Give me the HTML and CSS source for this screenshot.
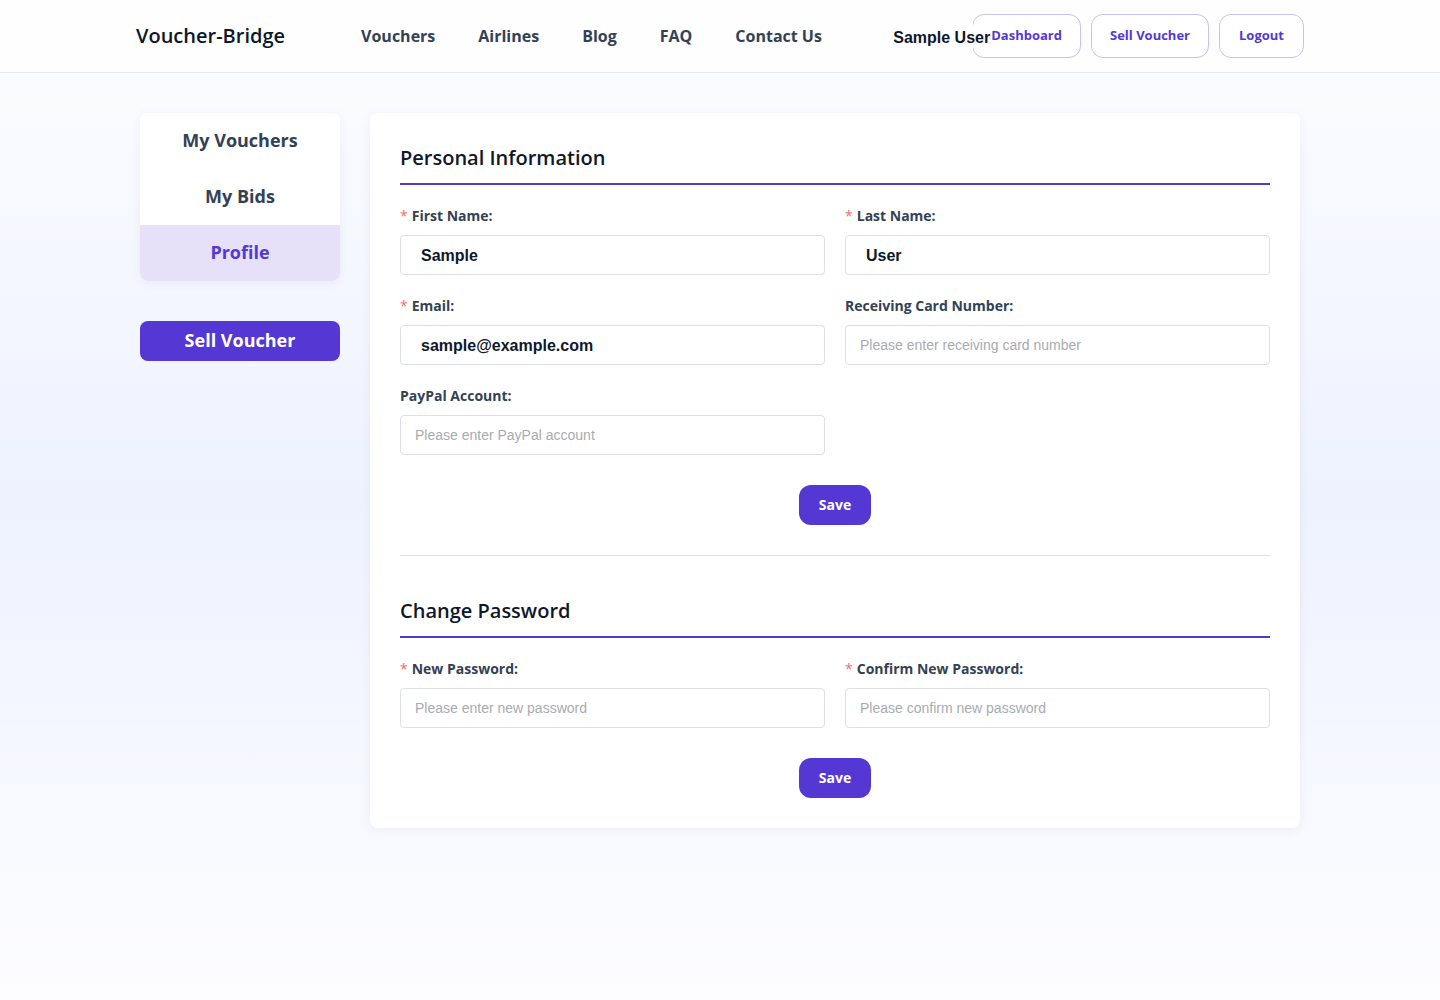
FILE: index.html
```
<!DOCTYPE html>
<html lang="en">
<head>
    <meta charset="UTF-8">
    <meta name="viewport" content="width=device-width, initial-scale=1.0">
    <title>Profile - Voucher-Bridge</title>
    <link rel="stylesheet" href="styles.css">
</head>
<body>
    <header class="header">
        <div class="header-inner">
            <a class="logo" href="#">Voucher-Bridge</a>
            <nav class="nav">
                <a href="#">Vouchers</a>
                <a href="#">Airlines</a>
                <a href="#">Blog</a>
                <a href="#">FAQ</a>
                <a href="#">Contact Us</a>
            </nav>
            <div class="actions">
                <span class="user-name">Sample User</span>
                <button type="button" class="btn-outline">Dashboard</button>
                <button type="button" class="btn-outline">Sell Voucher</button>
                <button type="button" class="btn-outline">Logout</button>
            </div>
        </div>
    </header>

    <div class="container">
        <aside class="sidebar">
            <nav class="menu">
                <a href="#">My Vouchers</a>
                <a href="#">My Bids</a>
                <a href="#" class="active">Profile</a>
            </nav>
            <button type="button" class="btn-sell">Sell Voucher</button>
        </aside>

        <main class="content">
            <form class="section">
                <h2>Personal Information</h2>
                <div class="form-grid">
                    <div class="form-item required">
                        <label for="firstName">First Name:</label>
                        <input type="text" id="firstName" class="filled" value="Sample">
                    </div>
                    <div class="form-item required">
                        <label for="lastName">Last Name:</label>
                        <input type="text" id="lastName" class="filled" value="User">
                    </div>
                    <div class="form-item required">
                        <label for="email">Email:</label>
                        <input type="email" id="email" class="filled" value="sample@example.com">
                    </div>
                    <div class="form-item">
                        <label for="card">Receiving Card Number:</label>
                        <input type="text" id="card" placeholder="Please enter receiving card number">
                    </div>
                    <div class="form-item">
                        <label for="paypal">PayPal Account:</label>
                        <input type="text" id="paypal" placeholder="Please enter PayPal account">
                    </div>
                </div>
                <button type="button" class="btn-save">Save</button>
            </form>

            <form class="section">
                <h2>Change Password</h2>
                <div class="form-grid">
                    <div class="form-item required">
                        <label for="newPassword">New Password:</label>
                        <input type="password" id="newPassword" placeholder="Please enter new password">
                    </div>
                    <div class="form-item required">
                        <label for="confirmPassword">Confirm New Password:</label>
                        <input type="password" id="confirmPassword" placeholder="Please confirm new password">
                    </div>
                </div>
                <button type="button" class="btn-save">Save</button>
            </form>
        </main>
    </div>
</body>
</html>
```
FILE: styles.css
```
* {
    box-sizing: border-box;
}
body {
    margin: 0;
    min-height: 100vh;
    font-family: "Open Sans", "Noto Sans", sans-serif;
    color: #334155;
    background: linear-gradient(180deg, #fdfdff 0%, #eef2ff 50%, #fdfdff 100%);
}
a {
    color: inherit;
    text-decoration: none;
}
button {
    padding: 0 0 2px;
    font-family: inherit;
    cursor: pointer;
}

/* header */
.header {
    background: #fefefe;
    border-bottom: 1px solid #e8eaef;
}
.header-inner {
    display: flex;
    align-items: center;
    max-width: 1200px;
    height: 72px;
    margin: 0 auto;
    padding: 0 16px;
}
.logo {
    margin-right: 76px;
    padding-bottom: 2px;
    font-size: 20px;
    font-weight: 600;
    color: #0f172a;
}
.nav {
    display: flex;
    gap: 43px;
    font-size: 16px;
    font-weight: 700;
    white-space: nowrap;
}
.actions {
    display: flex;
    gap: 10px;
    margin-left: auto;
}
.user-name {
    position: relative;
    z-index: 1;
    width: 80px;
    height: 44px;
    margin-right: -11px;
    background: #fefefe;
    font-family: "Liberation Sans", Arial, sans-serif;
    font-size: 16px;
    font-weight: bold;
    line-height: 48px;
    color: #0f172a;
    white-space: nowrap;
}
.btn-outline {
    min-width: 85px;
    height: 44px;
    padding: 0 18px 2px;
    border: 1px solid #c9c1f1;
    border-radius: 12px;
    background: #fff;
    color: #5538d4;
    font-size: 13px;
    font-weight: 700;
    white-space: nowrap;
}

/* layout */
.container {
    display: flex;
    align-items: flex-start;
    gap: 30px;
    max-width: 1200px;
    margin: 0 auto;
    padding: 40px 20px;
}
.sidebar {
    width: 200px;
    flex-shrink: 0;
}
.menu {
    overflow: hidden;
    border-radius: 8px;
    background: #fff;
    box-shadow: 0 2px 12px rgba(15, 23, 42, 0.05);
}
.menu a {
    display: block;
    padding-bottom: 2px;
    font-size: 18px;
    font-weight: 700;
    line-height: 54px;
    text-align: center;
}
.menu .active {
    background: #e6e0f8;
    color: #5538d4;
}
.btn-sell {
    width: 100%;
    height: 40px;
    margin-top: 40px;
    border: none;
    border-radius: 8px;
    background: #5538d4;
    color: #fff;
    font-size: 18px;
    font-weight: 700;
}
.content {
    flex: 1;
    padding: 30px;
    border-radius: 8px;
    background: #fff;
    box-shadow: 0 2px 12px rgba(15, 23, 42, 0.05);
}

/* forms */
.section + .section {
    margin-top: 30px;
    padding-top: 40px;
    border-top: 1px solid #dcdfe6;
}
h2 {
    margin: 0 0 20px;
    padding-bottom: 10px;
    border-bottom: 2px solid #5538d4;
    font-size: 20px;
    font-weight: 600;
    line-height: 30px;
    color: #0f172a;
}
.form-grid {
    display: grid;
    grid-template-columns: 1fr 1fr;
    gap: 20px;
}
.form-item label {
    display: block;
    margin-bottom: 8px;
    font-size: 14px;
    font-weight: 700;
    line-height: 22px;
}
.required label::before {
    content: "*";
    margin-right: 4px;
    color: #f56c6c;
    font-weight: 400;
}
.form-item input {
    display: block;
    width: 100%;
    height: 40px;
    padding: 0 14px;
    border: 1px solid #dcdfe6;
    border-radius: 4px;
    background: #fff;
    font-family: "Liberation Sans", Arial, sans-serif;
    font-size: 14px;
    color: #0f172a;
}
.form-item input::placeholder {
    color: #a8abb2;
}
.form-item .filled {
    padding: 2px 20px 0;
    font-size: 16px;
    font-weight: bold;
}
.btn-save {
    display: block;
    width: 72px;
    height: 40px;
    margin: 30px auto 0;
    border: none;
    border-radius: 12px;
    background: #5538d4;
    color: #fff;
    font-size: 14px;
    font-weight: 700;
}
```
